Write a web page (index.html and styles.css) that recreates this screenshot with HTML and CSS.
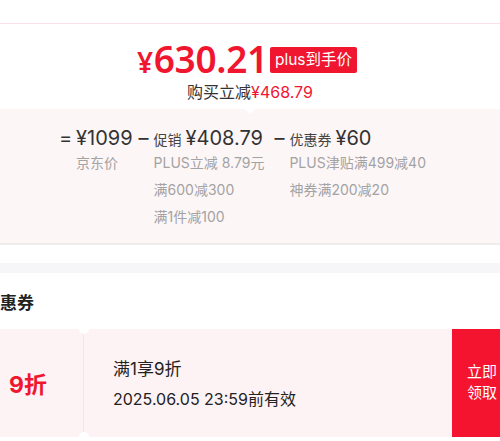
FILE: index.html
```html
<!DOCTYPE html>
<html>
<head>
  <meta charset="utf-8">
  <title>优惠券</title>
  <link rel="stylesheet" href="styles.css">
</head>
<body>
  <div class="page">
    <div class="top-gap"></div>

    <!-- Final price -->
    <div class="price-card">
      <div class="price-row">
        <span class="price"><span class="yen">¥</span>630.21</span>
        <span class="badge">plus到手价</span>
      </div>
      <div class="save">购买立减<span class="red">¥468.79</span></div>
    </div>

    <!-- Price breakdown -->
    <div class="breakdown">
      <div class="group">
        <span class="op op-eq">=</span>
        <div class="col">
          <div class="main"><span class="val">¥1099</span></div>
          <div class="sub">京东价</div>
        </div>
      </div>
      <div class="group">
        <span class="op">–</span>
        <div class="col">
          <div class="main"><span class="lbl">促销</span><span class="val">¥408.79</span></div>
          <div class="sub">PLUS立减 8.79元</div>
          <div class="sub">满600减300</div>
          <div class="sub">满1件减100</div>
        </div>
      </div>
      <div class="group">
        <span class="op">–</span>
        <div class="col">
          <div class="main"><span class="lbl">优惠券</span><span class="val">¥60</span></div>
          <div class="sub">PLUS津贴满499减40</div>
          <div class="sub">神券满200减20</div>
        </div>
      </div>
    </div>

    <div class="spacer"></div>
    <div class="band"></div>

    <h2 class="coupon-head">惠券</h2>
    <div class="coupon">
      <div class="coupon-left">9折</div>
      <div class="coupon-body">
        <div class="coupon-title">满1享9折</div>
        <div class="coupon-date">2025.06.05 23:59前有效</div>
      </div>
      <div class="coupon-btn">立即<br>领取</div>
    </div>
  </div>
</body>
</html>
```

FILE: styles.css
```css
body {
  margin: 0;
  background-color: #fff;
  color: #333;
  font-family: Inter, "Noto Sans CJK SC", sans-serif;
}
.page {
  width: 500px;
  height: 441px;
  overflow: hidden;
}
.top-gap {
  height: 23px;
  border-bottom: 1px solid #fbe1e5;
}
.price-card {
  position: relative;
  height: 85px;
  padding-top: 16px;
  box-sizing: border-box;
  text-align: center;
}
.price-card::after {
  content: "";
  position: absolute;
  left: 245px;
  bottom: -5px;
  border-left: 5px solid transparent;
  border-right: 5px solid transparent;
  border-top: 5px solid #fff;
}
.price-row {
  display: flex;
  justify-content: center;
  align-items: center;
  height: 40px;
  padding-right: 6px;
}
.price {
  color: #f0162f;
  font-family: "Noto Sans", sans-serif;
  font-size: 37px;
  font-weight: 600;
  letter-spacing: -0.3px;
  line-height: 40px;
}
.yen {
  font-size: 28px;
  margin-right: 1px;
}
.badge {
  margin-left: 2px;
  background-color: #f0162f;
  color: #fff;
  font-size: 15.5px;
  line-height: 26px;
  height: 26px;
  padding: 0 5px;
  border-radius: 2px;
}
.save {
  margin-top: 1px;
  font-size: 16px;
  line-height: 22px;
  color: #333;
}
.red {
  color: #f0162f;
}
.breakdown {
  display: flex;
  height: 136px;
  padding: 18px 0 0 59px;
  box-sizing: border-box;
  background-color: #fdf6f7;
  border-bottom: 2px solid #eeeced;
}
.group {
  display: flex;
  align-items: flex-start;
}
.group + .group {
  margin-left: 6px;
}
.group:last-child {
  margin-left: 10px;
}
.op {
  font-size: 20px;
  line-height: 22px;
  color: #333;
  width: 15px;
}
.op-eq {
  width: 17px;
}
.main {
  height: 22px;
  line-height: 22px;
  white-space: nowrap;
}
.lbl {
  font-size: 14px;
  color: #444;
  margin-right: 4px;
}
.val {
  font-size: 20px;
  color: #333;
}
.sub {
  font-size: 14px;
  line-height: 27px;
  color: #a3a3a3;
  white-space: nowrap;
}
.spacer {
  height: 18px;
}
.band {
  height: 10px;
  background-color: #f6f6f9;
}
.coupon-head {
  margin: 0;
  height: 56px;
  line-height: 60px;
  font-size: 17px;
  font-weight: 700;
  color: #222;
}
.coupon {
  display: flex;
  height: 108px;
  background-color: #fdf2f4;
}
.coupon-left {
  position: relative;
  width: 84px;
  padding-left: 9px;
  box-sizing: border-box;
  border-right: 1px solid #f6e4e7;
  display: flex;
  align-items: center;
  color: #f0162f;
  font-size: 23px;
  font-weight: 700;
}
.coupon-left::before,
.coupon-left::after {
  content: "";
  position: absolute;
  right: -6px;
  width: 10px;
  height: 10px;
  border-radius: 50%;
  background-color: #fff;
}
.coupon-left::before {
  top: -5px;
}
.coupon-left::after {
  bottom: -5px;
}
.coupon-body {
  flex: 1;
  padding: 28px 0 0 29px;
}
.coupon-title {
  font-size: 17px;
  line-height: 24px;
  color: #222;
}
.coupon-date {
  margin-top: 7px;
  font-size: 16px;
  line-height: 22px;
  color: #222;
}
.coupon-btn {
  width: 48px;
  padding: 32px 0 0 15px;
  box-sizing: border-box;
  background-color: #f5142f;
  color: #fff;
  font-size: 15px;
  line-height: 21px;
  white-space: nowrap;
  overflow: hidden;
}
```
